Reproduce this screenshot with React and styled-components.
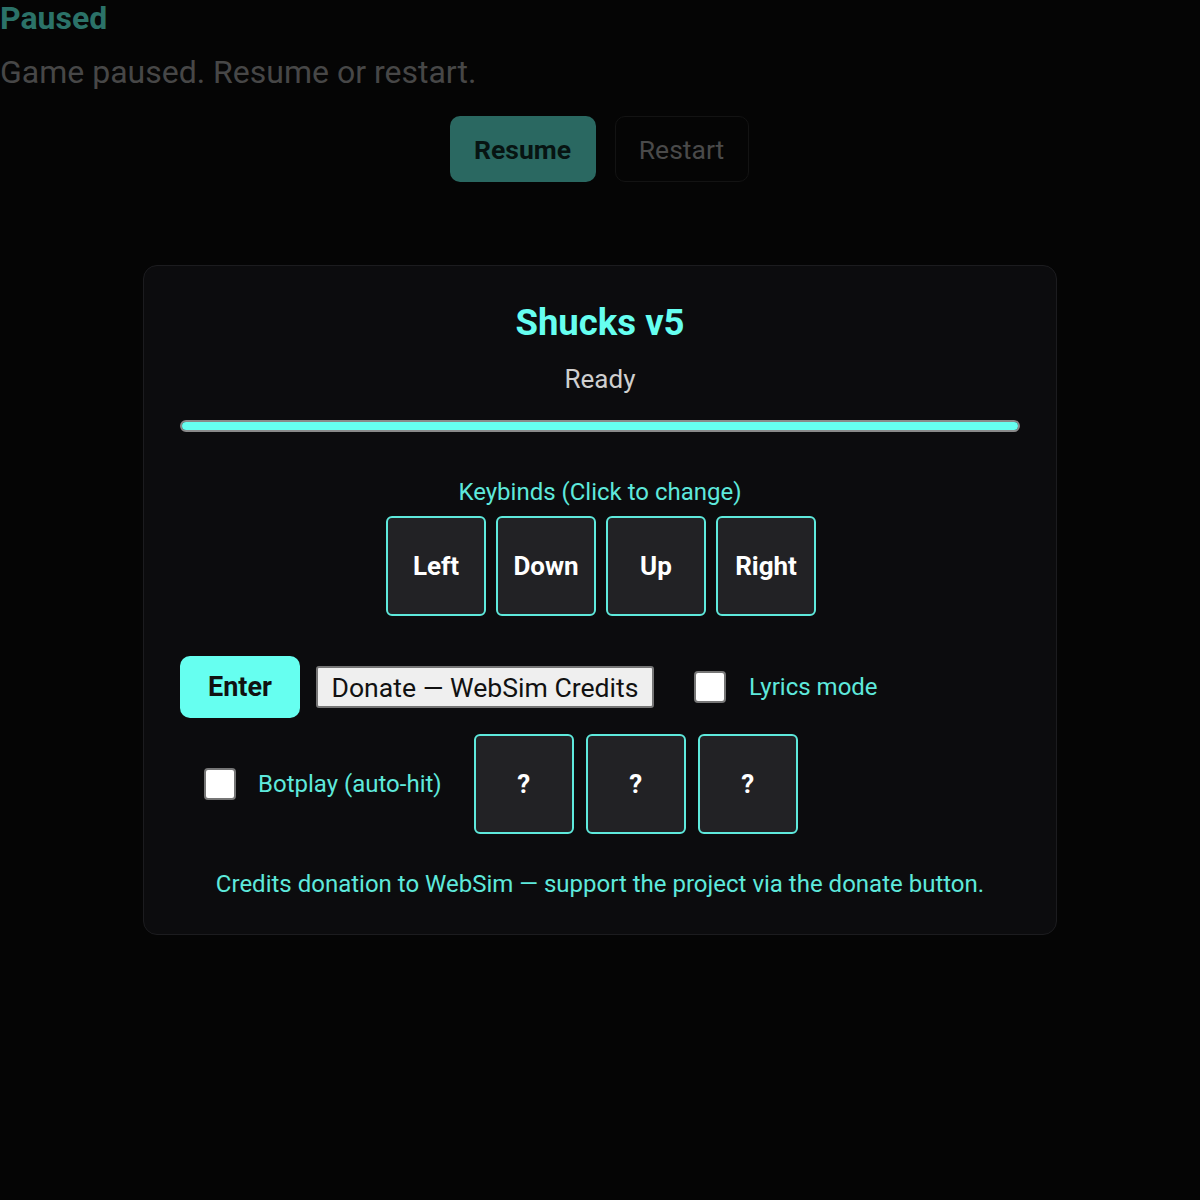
import React from 'react';
import styled, { createGlobalStyle } from 'styled-components';

const GlobalStyle = createGlobalStyle`
    html, body {
        margin: 0;
        padding: 0;
        background: #050505;
        font-family: Roboto, "Liberation Sans", sans-serif;
    }
`;

const keys = ['Left', 'Down', 'Up', 'Right'];
const extras = ['?', '?', '?'];

const App = () => {
    return (
        <Page>
            <GlobalStyle />
            <Overlay>
                <PausedTitle>Paused</PausedTitle>
                <PausedText>Game paused. Resume or restart.</PausedText>
                <OverlayButtons>
                    <ResumeButton>Resume</ResumeButton>
                    <RestartButton>Restart</RestartButton>
                </OverlayButtons>
            </Overlay>
            <Panel>
                <Title>Shucks v5</Title>
                <Status>Ready</Status>
                <Progress><ProgressFill style={{ width: '100%' }} /></Progress>
                <Hint>Keybinds (Click to change)</Hint>
                <KeyRow>
                    {keys.map((k) => <KeyBox key={k}>{k}</KeyBox>)}
                </KeyRow>
                <ControlRow>
                    <EnterButton>Enter</EnterButton>
                    <DonateButton>Donate — WebSim Credits</DonateButton>
                    <CheckLabel $left={40}>
                        <Check />
                        <span>Lyrics mode</span>
                    </CheckLabel>
                </ControlRow>
                <ExtraRow>
                    <CheckLabel $left={24} $gap={22}>
                        <Check />
                        <span>Botplay (auto-hit)</span>
                    </CheckLabel>
                    <ExtraKeys>
                        {extras.map((k, i) => <KeyBox key={i}>{k}</KeyBox>)}
                    </ExtraKeys>
                </ExtraRow>
                <Footer>Credits donation to WebSim — support the project via the donate button.</Footer>
            </Panel>
        </Page>
    );
};

export default App;

const Page = styled.div`
    min-height: 1200px;
    background: #050505;
    display: flex;
    flex-direction: column;
    align-items: center;
`;

const Overlay = styled.div`
    width: 100%;
    display: flex;
    flex-direction: column;
`;

const PausedTitle = styled.h2`
    margin: 0;
    font-size: 32px;
    line-height: 37px;
    font-weight: 700;
    color: #2b7268;
`;

const PausedText = styled.p`
    margin: 0;
    margin-top: 16px;
    font-size: 32px;
    line-height: 38px;
    color: #474747;
`;

const OverlayButtons = styled.div`
    display: flex;
    justify-content: center;
    gap: 19px;
    margin-top: 25px;
    margin-left: -2px;
`;

const ResumeButton = styled.button`
    width: 146px;
    height: 66px;
    border: none;
    border-radius: 10px;
    background: #2a6861;
    color: #071412;
    font-family: inherit;
    font-size: 26.5px;
    font-weight: 700;
`;

const RestartButton = styled.button`
    width: 134px;
    height: 66px;
    border: 1px solid #131313;
    border-radius: 10px;
    background: #050505;
    color: #4a4a4a;
    font-family: inherit;
    font-size: 26.5px;
`;

const Panel = styled.div`
    box-sizing: border-box;
    width: 914px;
    margin-top: 83px;
    padding: 36px;
    background: #0c0c0e;
    border: 1px solid #1c1c1f;
    border-radius: 14px;
    display: flex;
    flex-direction: column;
    align-items: center;
`;

const Title = styled.h1`
    margin: 0;
    font-size: 36.5px;
    line-height: 42px;
    font-weight: 700;
    color: #66fff0;
`;

const Status = styled.div`
    margin-top: 21px;
    font-size: 26px;
    line-height: 28px;
    color: #cfcfcf;
`;

const Progress = styled.div`
    box-sizing: border-box;
    width: 100%;
    height: 12px;
    margin-top: 27px;
    border: 2px solid #8a8a8a;
    border-radius: 6px;
    background: #1a1a1a;
    overflow: hidden;
`;

const ProgressFill = styled.div`
    height: 100%;
    background: #66fff0;
`;

const Hint = styled.div`
    margin-top: 47px;
    font-size: 24px;
    line-height: 26px;
    color: #5ee9dc;
`;

const KeyRow = styled.div`
    display: flex;
    gap: 10px;
    margin-top: 11px;
    margin-left: 2px;
`;

const KeyBox = styled.div`
    box-sizing: border-box;
    width: 100px;
    height: 100px;
    display: flex;
    align-items: center;
    justify-content: center;
    background: #222225;
    border: 2px solid #5ee9dc;
    border-radius: 6px;
    color: #ffffff;
    font-size: 26px;
    font-weight: 700;
`;

const ControlRow = styled.div`
    align-self: stretch;
    display: flex;
    align-items: center;
    margin-top: 40px;
`;

const EnterButton = styled.button`
    width: 120px;
    height: 62px;
    border: none;
    border-radius: 10px;
    background: #66fff0;
    color: #111;
    font-family: inherit;
    font-size: 27px;
    font-weight: 700;
`;

const DonateButton = styled.button`
    box-sizing: border-box;
    width: 338px;
    height: 42px;
    margin-left: 16px;
    padding: 0;
    background: #efefef;
    border: 2px solid #767676;
    border-radius: 3px;
    color: #111;
    font-family: inherit;
    font-size: 26.6px;
`;

const CheckLabel = styled.label`
    display: flex;
    align-items: center;
    gap: ${({ $gap }) => $gap || 23}px;
    margin-left: ${({ $left }) => $left}px;
    font-size: 24px;
    color: #5ee9dc;
`;

const Check = styled.span`
    box-sizing: border-box;
    width: 32px;
    height: 32px;
    background: #ffffff;
    border: 2px solid #767676;
    border-radius: 4px;
`;

const ExtraRow = styled.div`
    align-self: stretch;
    display: flex;
    align-items: center;
    gap: 32px;
    margin-top: 16px;
`;

const ExtraKeys = styled.div`
    display: flex;
    gap: 12px;
`;

const Footer = styled.div`
    margin-top: 36px;
    font-size: 24px;
    line-height: 28px;
    color: #5ee9dc;
`;
